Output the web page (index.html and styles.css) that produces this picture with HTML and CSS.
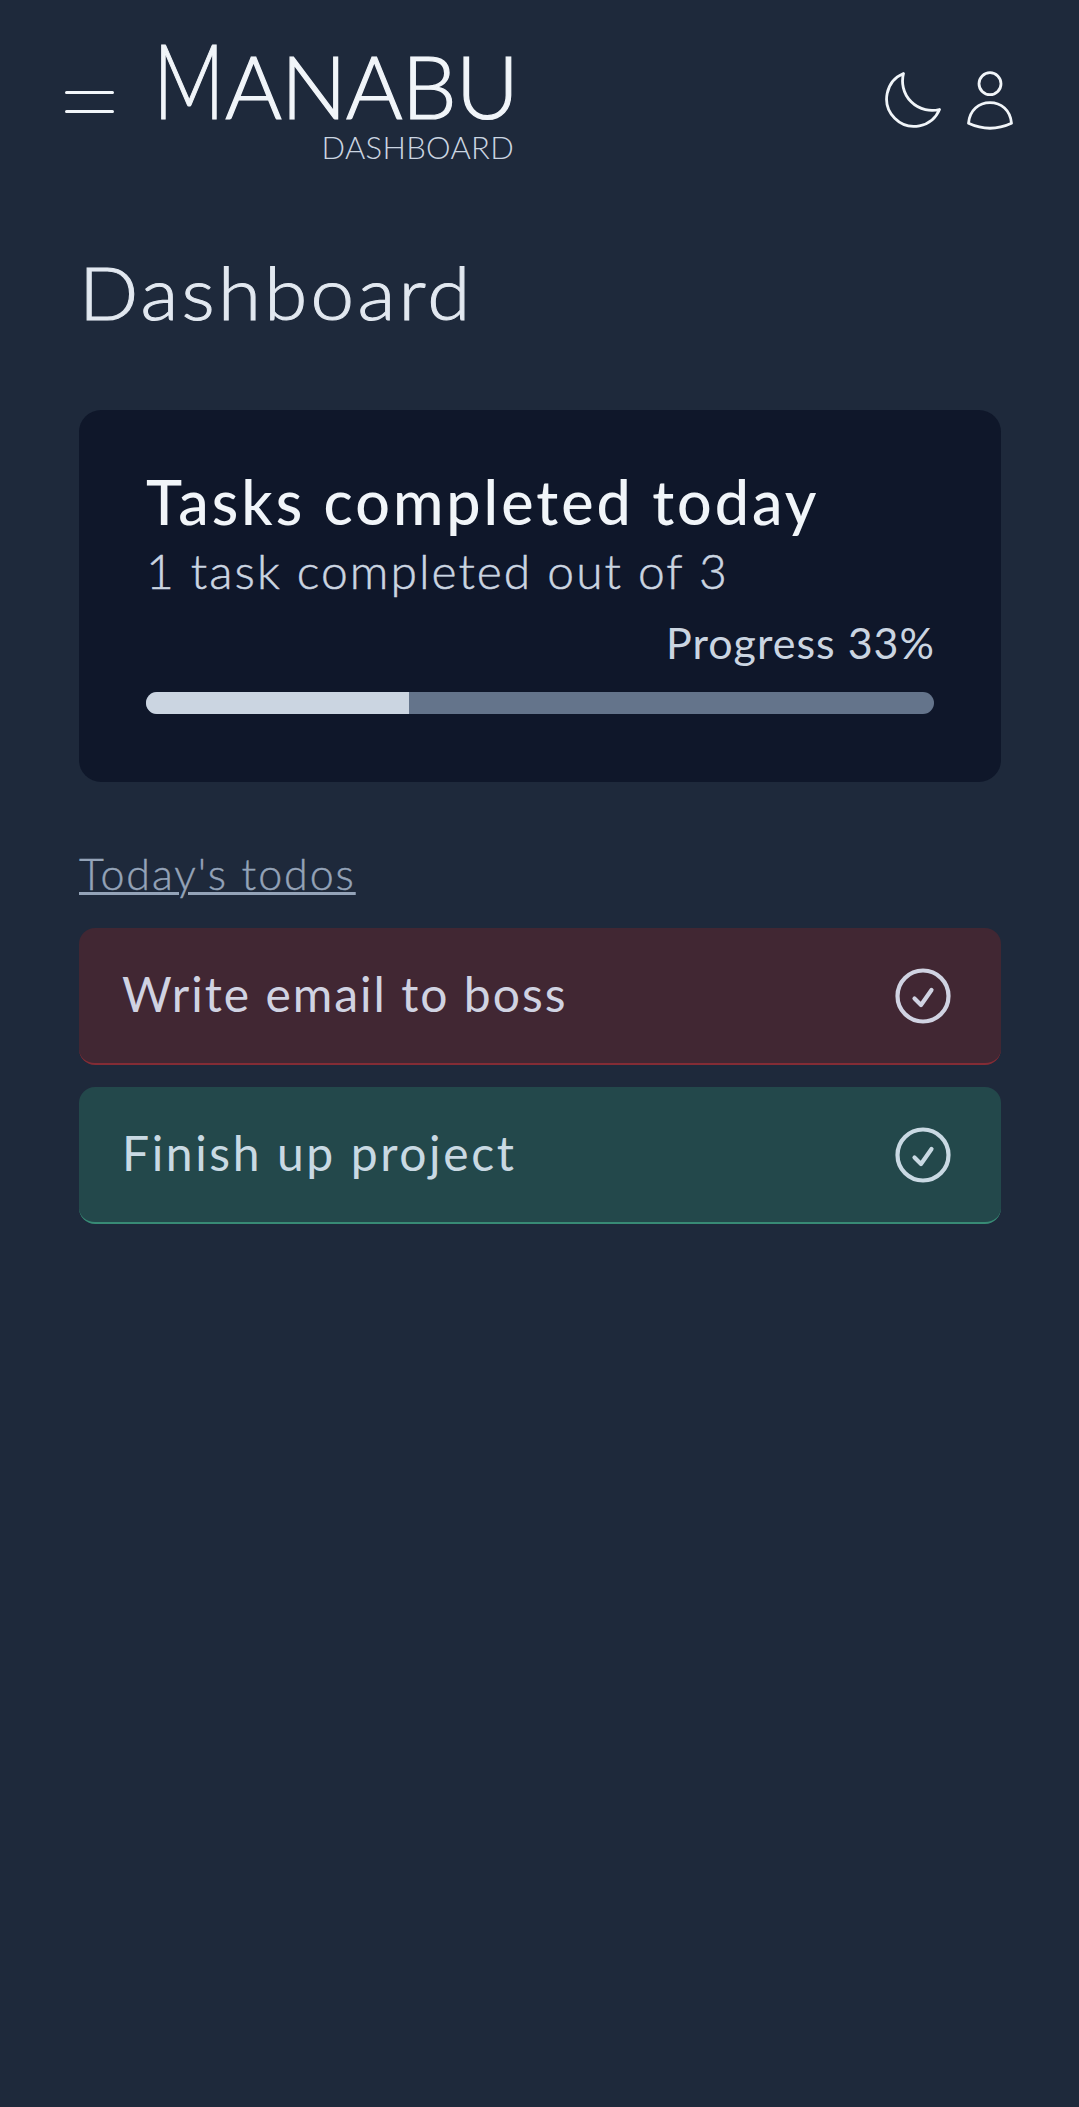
FILE: index.html
```html
<!DOCTYPE html>
<html lang="en">
<head>
<meta charset="utf-8">
<title>Manabu Dashboard</title>
<link rel="stylesheet" href="styles.css">
</head>
<body>
<header class="header">
  <button class="icon-button menu" aria-label="Menu">
    <svg width="50" height="24" viewBox="0 0 50 24" fill="none" stroke="currentColor" stroke-width="3" stroke-linecap="round"><path d="M2.500 3.500H48.500M2.500 22.400H48.500"/></svg>
  </button>
  <div class="logo">
    <span class="logo-name"><span class="logo-initial">M</span>ANABU</span>
    <span class="logo-sub">DASHBOARD</span>
  </div>
  <nav class="actions">
    <button class="icon-button" aria-label="Dark mode">
      <svg width="58" height="60" viewBox="0 0 58 60" fill="none" stroke="currentColor" stroke-width="2.8" stroke-linejoin="round"><path d="M19.500 3.500A27.500 27.500 0 1 0 55.500 39.500A29.500 29.500 0 0 1 19.500 3.500Z"/></svg>
    </button>
    <button class="icon-button" aria-label="Account">
      <svg width="48" height="60" viewBox="0 0 48 60" fill="none" stroke="currentColor" stroke-width="2.8" stroke-linejoin="round"><circle cx="24" cy="13.7" r="11"/><path d="M2.500 53.300C3.500 40 13 32.600 24 32.600S44.500 40 45.500 53.300C31 60 17 60 2.500 53.300Z"/></svg>
    </button>
  </nav>
</header>
<main class="main">
  <h1 class="title">Dashboard</h1>
  <section class="card">
    <h2 class="card-title">Tasks completed today</h2>
    <p class="card-text">1 task completed out of 3</p>
    <p class="card-progress">Progress 33%</p>
    <div class="bar"><div class="bar-fill" style="width: 33.4%"></div></div>
  </section>
  <h3 class="todos-title">Today's todos</h3>
  <ul class="todos">
    <li class="todo todo-red">
      <span class="todo-label">Write email to boss</span>
      <svg width="56" height="56" viewBox="0 0 56 56" fill="none" stroke="currentColor" stroke-width="4.2" stroke-linecap="round" stroke-linejoin="round"><circle cx="28" cy="28" r="25.500"/><path d="M19.500 30.500L26 37L36.500 22"/></svg>
    </li>
    <li class="todo todo-green">
      <span class="todo-label">Finish up project</span>
      <svg width="56" height="56" viewBox="0 0 56 56" fill="none" stroke="currentColor" stroke-width="4.2" stroke-linecap="round" stroke-linejoin="round"><circle cx="28" cy="28" r="25.500"/><path d="M19.500 30.500L26 37L36.500 22"/></svg>
    </li>
  </ul>
</main>
</body>
</html>
```
FILE: styles.css
```css
* { box-sizing: border-box; margin: 0; padding: 0; }
body {
  min-height: 2107px;
  background: #1e293b;
  color: #cbd5e1;
  font-family: Lato, "Open Sans", sans-serif;
  font-weight: 300;
}
svg { display: block; }
.header {
  display: flex;
  align-items: flex-start;
  height: 203px;
  padding: 0 65px 0 64px;
  color: #f1f5f9;
}
.icon-button { border: 0; background: none; color: inherit; }
.menu { margin-top: 89px; }
.logo {
  display: flex;
  flex-direction: column;
  align-items: flex-end;
  width: 360px;
  margin-left: 44px;
  padding-top: 30px;
  white-space: nowrap;
}
.logo-name {
  height: 98px;
  font-size: 87px;
  line-height: 97px;
  letter-spacing: -1px;
  -webkit-text-stroke: 1.2px currentColor;
}
.logo-initial {
  display: inline-block;
  font-size: 104px;
  line-height: 97px;
  transform: scaleX(0.75);
  transform-origin: 92% 50%;
}
.logo-sub {
  margin-right: 4px;
  font-size: 31px;
  line-height: 38px;
  font-weight: 300;
  letter-spacing: 0.3px;
  color: #cbd5e1;
}
.actions { display: flex; gap: 24px; margin: 70px 0 0 auto; }
.main { padding: 0 78px 0 79px; }
.title {
  margin-top: 45px;
  margin-bottom: 74px;
  font-size: 72px;
  line-height: 88px;
  font-weight: 300;
  letter-spacing: 3px;
  color: #e2e8f0;
  transform: scaleX(1.085);
  transform-origin: 0 50%;
  -webkit-text-stroke: 1px currentColor;
}
.card {
  height: 372px;
  padding: 57px 67px 0;
  border-radius: 22px;
  background: #0f172a;
}
.card-title { font-size: 61px; line-height: 69px; font-weight: 500; letter-spacing: 3px; color: #f1f5f9; }
.card-text { font-size: 48px; line-height: 70px; letter-spacing: 2px; -webkit-text-stroke: 0.5px currentColor; }
.card-progress { margin-right: -1px; font-size: 43px; line-height: 74px; font-weight: 400; letter-spacing: 1px; text-align: right; }
.bar { height: 22px; margin-top: 12px; overflow: hidden; border-radius: 11px; background: #64748b; }
.bar-fill { height: 100%; background: #cbd5e1; }
.todos-title {
  margin: 62px 0 24px;
  font-size: 43px;
  line-height: 60px;
  font-weight: 300;
  letter-spacing: 1.9px;
  color: #94a3b8;
  text-decoration: underline;
  text-decoration-thickness: 3px;
  text-underline-offset: 2px;
  -webkit-text-stroke: 0.4px currentColor;
}
.todos { display: grid; gap: 22px; list-style: none; }
.todo {
  display: flex;
  align-items: center;
  justify-content: space-between;
  height: 137px;
  padding: 0 50px 0 43px;
  border-bottom: 2px solid;
  border-radius: 16px;
}
.todo-label { padding-bottom: 5px; font-size: 48px; font-weight: 400; letter-spacing: 2px; }
.todo svg { flex: none; }
.todo-red { background: #412733; border-color: #842c35; color: #d0d3e2; }
.todo-green { background: #23484b; border-color: #388a75; color: #c9d9e3; }
.todo-green .todo-label { letter-spacing: 2.6px; }
```
